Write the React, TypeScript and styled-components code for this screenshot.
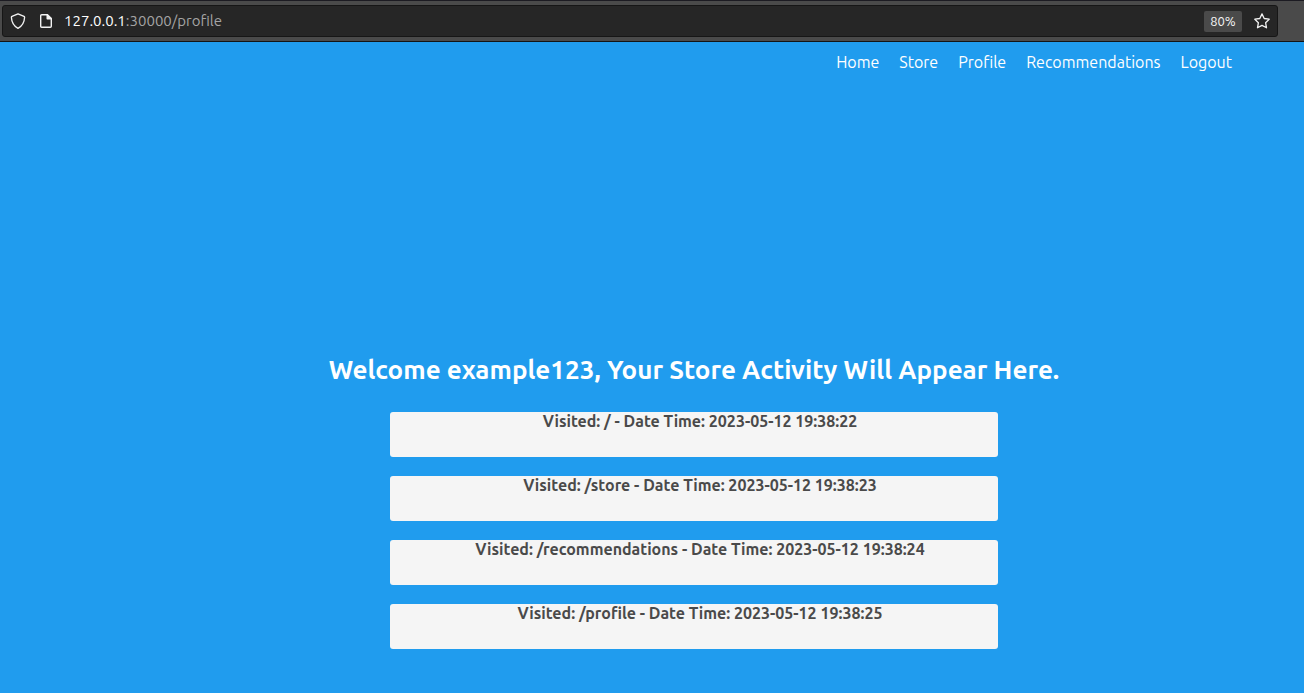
import React from "react";
import styled, { createGlobalStyle } from "styled-components";

const GlobalStyle = createGlobalStyle`
  *, *::before, *::after { box-sizing: border-box; }
  html, body { margin: 0; background: #209cee; }
  body, button, input { font-family: Ubuntu, "Noto Sans", "Open Sans", sans-serif; }
`;

const Page = styled.div`
  display: flex;
  flex-direction: column;
  min-height: 100vh;
  background: #209cee;
  color: #ffffff;
`;

const Toolbar = styled.header`
  height: 42px;
  padding: 4px 26px 4px 2px;
  background: #4a4a4a;
  border-top: 1px solid #1c1b22;
  border-bottom: 1px solid #141414;
`;

const AddressField = styled.form`
  display: flex;
  align-items: center;
  height: 32px;
  margin: 0;
  padding: 0 7px;
  background: #262626;
  border: 1px solid #161616;
  border-radius: 3px;
`;

const IconButton = styled.button`
  display: flex;
  align-items: center;
  justify-content: center;
  width: 16px;
  height: 16px;
  margin: 0 11px 0 0;
  padding: 0;
  border: 0;
  background: none;
  color: #f2f2f2;
`;

const StarButton = styled(IconButton)`
  margin: 0 0 0 12px;
`;

const Host = styled.label`
  font-size: 15px;
  line-height: 20px;
  color: #ffffff;
`;

const Path = styled.input`
  flex: 1;
  min-width: 0;
  height: 20px;
  padding: 0;
  border: 0;
  outline: 0;
  background: none;
  color: #a4a4a4;
  font-size: 15px;
  line-height: 20px;
`;

const ZoomBadge = styled.button`
  width: 38px;
  height: 21px;
  padding: 0;
  border: 0;
  border-radius: 2px;
  background: #4a4a4a;
  color: #f5f5f5;
  font-size: 13px;
  line-height: 20px;
`;

const Nav = styled.nav`
  display: flex;
  justify-content: flex-end;
  gap: 20px;
  padding: 8px 72px 8px 0;
`;

const NavLink = styled.a`
  color: #ffffff;
  font-size: 16px;
  line-height: 24px;
  text-decoration: none;
`;

const Main = styled.main`
  display: flex;
  flex-direction: column;
  align-items: center;
  padding: 270px 0 44px 84px;
`;

const Title = styled.h1`
  margin: 0 0 24px;
  font-size: 26px;
  line-height: 36px;
  font-weight: 700;
  text-align: center;
`;

const ActivityList = styled.ul`
  display: flex;
  flex-direction: column;
  gap: 19px;
  width: 608px;
  max-width: 100%;
  margin: 0;
  padding: 0;
  list-style: none;
`;

const Activity = styled.li`
  min-height: 45px;
  padding-left: 12px;
  border-radius: 3px;
  background: #f5f5f5;
  color: #4a4a4a;
  font-size: 16px;
  line-height: 18px;
  font-weight: 700;
  text-align: center;
`;

const links = [
  { label: "Home", href: "/" },
  { label: "Store", href: "/store" },
  { label: "Profile", href: "/profile" },
  { label: "Recommendations", href: "/recommendations" },
  { label: "Logout", href: "/logout" },
];

const visits = [
  { path: "/", time: "2023-05-12 19:38:22" },
  { path: "/store", time: "2023-05-12 19:38:23" },
  { path: "/recommendations", time: "2023-05-12 19:38:24" },
  { path: "/profile", time: "2023-05-12 19:38:25" },
];

const ShieldIcon = () => (
  <svg width="16" height="16" viewBox="0 0 16 16" fill="none" stroke="currentColor" strokeWidth="1.3" strokeLinejoin="round" aria-hidden="true">
    <path d="M8 .8 14 3.3Q14.7 3.6 14.6 4.4C14.3 9.3 12.5 13 8 15.3 3.5 13 1.7 9.3 1.4 4.4Q1.3 3.6 2 3.3Z" />
  </svg>
);

const PageIcon = () => (
  <svg width="16" height="16" viewBox="-1 0 16 16" fill="none" stroke="currentColor" strokeWidth="1.4" strokeLinejoin="round" aria-hidden="true">
    <path d="M3.7 1.7H9.4L13.3 5.6V13.3Q13.3 14.3 12.3 14.3H3.7Q2.7 14.3 2.7 13.3V2.7Q2.7 1.7 3.7 1.7Z" />
    <path d="M9.2 1.8V5.8H13.2Z" fill="currentColor" />
  </svg>
);

const StarIcon = () => (
  <svg width="16" height="16" viewBox="0 0 16 16" fill="none" stroke="currentColor" strokeWidth="1.3" strokeLinejoin="round" aria-hidden="true">
    <path d="M8 .9 10.2 5.5 15.2 6.2 11.6 9.7 12.5 14.8 8 12.4 3.5 14.8 4.4 9.7 .8 6.2 5.8 5.5Z" />
  </svg>
);

export default function App() {
  return (
    <>
      <GlobalStyle />
      <Page>
        <Toolbar>
          <AddressField onSubmit={(e: React.FormEvent) => e.preventDefault()}>
            <IconButton type="button" aria-label="Tracking protection"><ShieldIcon /></IconButton>
            <IconButton type="button" aria-label="Site information"><PageIcon /></IconButton>
            <Host htmlFor="path">127.0.0.1</Host>
            <Path id="path" type="text" defaultValue=":30000/profile" spellCheck={false} />
            <ZoomBadge type="button">80%</ZoomBadge>
            <StarButton type="button" aria-label="Bookmark"><StarIcon /></StarButton>
          </AddressField>
        </Toolbar>
        <Nav>
          {links.map((link) => (
            <NavLink key={link.href} href={link.href}>{link.label}</NavLink>
          ))}
        </Nav>
        <Main>
          <Title>Welcome example123, Your Store Activity Will Appear Here.</Title>
          <ActivityList>
            {visits.map((visit) => (
              <Activity key={visit.path}>
                {`Visited: ${visit.path} - Date Time: ${visit.time}`}
              </Activity>
            ))}
          </ActivityList>
        </Main>
      </Page>
    </>
  );
}
